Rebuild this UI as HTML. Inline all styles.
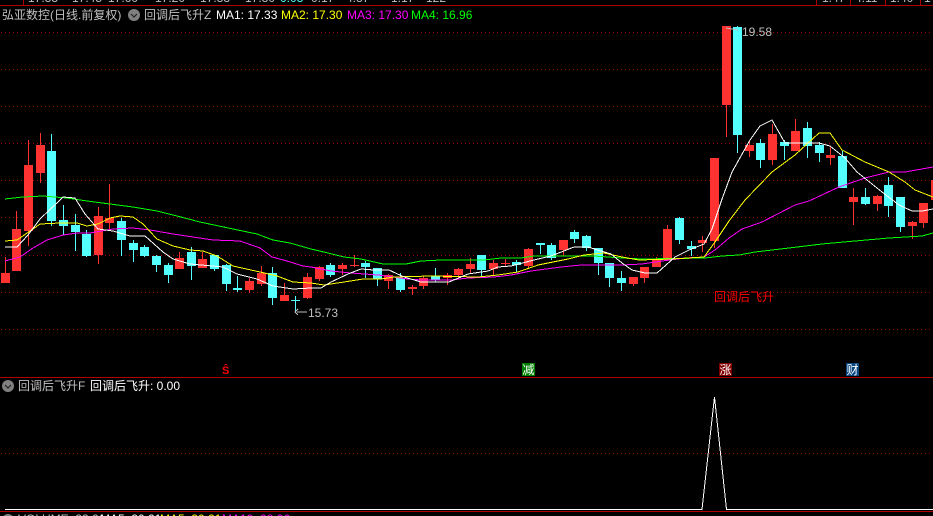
<!DOCTYPE html>
<html><head><meta charset="utf-8"><style>
html,body{margin:0;padding:0;background:#000;width:933px;height:516px;overflow:hidden}
#w{position:relative;width:933px;height:516px;overflow:hidden;background:#000}
svg{position:absolute;left:0;top:0}
.t{position:absolute;white-space:pre;font:12px/14px "Liberation Sans","WenQuanYi Zen Hei","Noto Sans CJK SC",sans-serif}
.b{position:absolute;width:13px;height:13px;top:363px;color:#fff;text-align:center;font:12px/13px "WenQuanYi Zen Hei","Noto Sans CJK SC",sans-serif}
</style></head><body><div id="w">
<svg width="933" height="516" viewBox="0 0 933 516">
<g stroke="#a00000" stroke-dasharray="1 3" shape-rendering="crispEdges">
<path d="M1 32.5H933M1 69.5H933M1 106.5H933M1 143.5H933M1 180.5H933M1 217.5H933M1 255.5H933M1 292.5H933M1 329.5H933M1 453.5H933"/>
</g>
<g fill="#ff3232" shape-rendering="crispEdges"><path d="
M5 257h1V283h-1zM1 273h9V283h-9z
M16 211h1V271h-1zM12 229h9V271h-9z
M28 140h1V246h-1zM24 165h9V231h-9z
M40 133h1V183h-1zM36 145h9V173h-9z
M98 207h1V264h-1zM94 216h9V255h-9z
M109 184h1V230h-1zM105 218h9V223h-9z
M179 252h1V269h-1zM175 258h9V269h-9z
M202 252h1V268h-1zM198 259h9V268h-9z
M249 278h1V293h-1zM245 281h9V290h-9z
M261 266h1V286h-1zM257 273h9V284h-9z
M284 283h1V301h-1zM280 295h9V301h-9z
M307 273h1V299h-1zM303 277h9V298h-9z
M319 266h1V281h-1zM315 267h9V279h-9z
M342 263h1V275h-1zM338 265h9V269h-9z
M354 255h1V267h-1zM350 265h9V266h-9z
M388 274h1V289h-1zM384 275h9V281h-9z
M412 285h1V295h-1zM408 287h9V289h-9z
M423 276h1V289h-1zM419 278h9V286h-9z
M447 273h1V285h-1zM443 275h9V278h-9z
M458 268h1V278h-1zM454 269h9V275h-9z
M470 258h1V273h-1zM466 264h9V269h-9z
M493 260h1V275h-1zM489 263h9V269h-9z
M505 259h1V267h-1zM501 263h9V264h-9z
M528 248h1V268h-1zM524 249h9V266h-9z
M563 240h1V256h-1zM559 240h9V250h-9z
M633 277h1V286h-1zM629 277h9V284h-9z
M644 267h1V283h-1zM640 267h9V278h-9z
M656 257h1V267h-1zM652 260h9V267h-9z
M667 225h1V260h-1zM663 229h9V260h-9z
M702 236h1V252h-1zM698 240h9V243h-9z
M714 158h1V248h-1zM710 158h9V241h-9z
M726 26h1V137h-1zM722 26h9V105h-9z
M749 141h1V157h-1zM745 145h9V151h-9z
M772 124h1V165h-1zM768 134h9V160h-9z
M795 119h1V151h-1zM791 131h9V151h-9z
M830 147h1V165h-1zM826 155h9V158h-9z
M853 188h1V225h-1zM849 197h9V202h-9z
M877 195h1V211h-1zM873 196h9V204h-9z
M912 221h1V239h-1zM908 222h9V226h-9z
M923 203h1V228h-1zM919 203h9V223h-9z
M931 180h2V200h-2z"/></g>
<g fill="#54ffff" shape-rendering="crispEdges"><path d="
M51 134h1V226h-1zM47 151h9V221h-9z
M63 205h1V235h-1zM59 220h9V226h-9z
M75 214h1V251h-1zM71 225h9V232h-9z
M86 230h1V257h-1zM82 234h9V256h-9z
M121 218h1V256h-1zM117 221h9V240h-9z
M133 240h1V262h-1zM129 243h9V250h-9z
M144 245h1V257h-1zM140 247h9V256h-9z
M156 255h1V272h-1zM152 256h9V265h-9z
M168 263h1V283h-1zM164 265h9V275h-9z
M191 247h1V280h-1zM187 252h9V266h-9z
M214 255h1V271h-1zM210 255h9V269h-9z
M226 264h1V291h-1zM222 265h9V284h-9z
M237 276h1V292h-1zM233 288h9V290h-9z
M272 267h1V305h-1zM268 273h9V298h-9z
M295 296h1V313h-1zM291 300h9V301h-9z
M330 263h1V277h-1zM326 265h9V275h-9z
M365 261h1V278h-1zM361 263h9V267h-9z
M377 268h1V286h-1zM373 268h9V279h-9z
M400 273h1V292h-1zM396 278h9V290h-9z
M435 268h1V282h-1zM431 276h9V280h-9z
M481 255h1V277h-1zM477 255h9V270h-9z
M516 260h1V272h-1zM512 262h9V265h-9z
M540 243h1V254h-1zM536 243h9V245h-9z
M551 243h1V260h-1zM547 245h9V258h-9z
M574 230h1V243h-1zM570 232h9V239h-9z
M586 235h1V251h-1zM582 236h9V248h-9z
M598 248h1V275h-1zM594 248h9V263h-9z
M609 263h1V287h-1zM605 263h9V278h-9z
M621 271h1V291h-1zM617 278h9V283h-9z
M679 217h1V244h-1zM675 218h9V240h-9z
M691 241h1V256h-1zM687 246h9V249h-9z
M737 26h1V153h-1zM733 27h9V135h-9z
M760 139h1V168h-1zM756 143h9V160h-9z
M784 140h1V160h-1zM780 142h9V146h-9z
M807 122h1V158h-1zM803 128h9V146h-9z
M819 142h1V162h-1zM815 145h9V153h-9z
M842 151h1V188h-1zM838 156h9V188h-9z
M865 188h1V205h-1zM861 197h9V204h-9z
M888 177h1V217h-1zM884 185h9V206h-9z
M900 197h1V232h-1zM896 197h9V227h-9z"/></g>
<g fill="none" stroke-width="1" shape-rendering="crispEdges">
<polyline stroke="#00ff00" points="5,199 23,197 43,196 67,198 87,201 110,204 133,207 157,211 173,215 200,222 233,229 257,234 273,240 290,243 311,249 328,253 344,257 361,259 383,264 406,264 421,261 441,260 484,260 501,258 521,258 534,256 578,256 594,256 622,258 642,259 705,258 722,256 739,255 755,252 789,248 822,244 855,241 889,238 922,236 933,233"/>
<polyline stroke="#ff00ff" points="5,261 20,257 33,248 47,240 63,235 77,233 90,233 113,229 133,228 150,230 173,234 213,240 240,241 260,248 272,257 287,261 303,266 311,267 331,271 351,273 378,275 408,279 421,280 451,280 468,278 494,277 511,275 531,271 561,267 581,265 622,265 642,264 662,261 685,258 704,257 715,250 729,238 742,229 762,222 795,205 809,201 839,187 865,178 889,172 905,172 933,167"/>
<polyline stroke="#ffff00" points="5,241 17,240 33,229 40,224 60,223 77,223 87,226 98,224 110,218 120,216 133,217 143,224 157,239 173,246 190,250 203,251 217,256 233,266 260,272 277,276 293,282 311,283 324,285 344,282 363,279 381,279 394,277 431,276 478,277 498,275 518,272 538,265 568,259 584,255 604,253 622,257 639,260 672,259 704,257 715,242 729,221 745,200 772,172 795,155 819,133 830,133 842,150 865,162 889,172 905,182 915,190 933,197"/>
<polyline stroke="#ffffff" points="5,247 17,247 28,235 40,219 60,200 63,197 75,198 85,214 98,229 113,231 130,236 145,236 163,252 173,259 190,264 223,267 237,274 257,279 273,286 293,289 311,288 321,288 331,282 348,274 361,269 374,270 389,270 404,277 421,282 449,282 468,274 488,271 498,267 511,266 534,260 551,256 574,247 588,247 611,254 622,263 632,270 645,273 657,273 675,257 689,250 704,244 712,229 722,199 732,172 750,140 760,126 772,120 785,143 819,143 830,146 845,158 857,172 882,192 899,205 912,211 922,211 933,209"/>
<polyline stroke="#ffffff" points="5,509.5 702,509.5 714.5,397 726.5,509.5 933,509.5"/>
<polyline stroke="#c0c0c0" points="726,28 738,30"/>
<polyline stroke="#c0c0c0" points="297,312 307,312"/>
<polyline stroke="#c0c0c0" points="298,309 295,312 298,315"/>
</g>
<g fill="#b00000" shape-rendering="crispEdges">
<rect x="0" y="5" width="933" height="1"/>
<rect x="0" y="377" width="933" height="1"/>
<rect x="0" y="511" width="933" height="1"/>
<rect x="23" y="0" width="1" height="5"/>
<rect x="816" y="0" width="1" height="5"/>
<rect x="850" y="0" width="1" height="5"/>
<rect x="885" y="0" width="1" height="5"/>
<rect x="920" y="0" width="1" height="5"/>
</g>
<circle cx="134" cy="15" r="6" fill="#808080"/>
<path d="M131 14l3 3 3-3" fill="none" stroke="#222" stroke-width="1.2"/>
<circle cx="8" cy="386" r="6" fill="#808080"/>
<path d="M5 385l3 3 3-3" fill="none" stroke="#222" stroke-width="1.2"/>
<circle cx="8" cy="520" r="6" fill="#808080"/>
</svg>
<div class="t" style="left:28px;top:-9px;color:#c0c0c0">17.33</div>
<div class="t" style="left:72px;top:-9px;color:#c0c0c0">17.45</div>
<div class="t" style="left:108px;top:-9px;color:#c0c0c0">17.60</div>
<div class="t" style="left:155px;top:-9px;color:#c0c0c0">17.20</div>
<div class="t" style="left:200px;top:-9px;color:#c0c0c0">17.33</div>
<div class="t" style="left:245px;top:-9px;color:#c0c0c0">17.30</div>
<div class="t" style="left:280px;top:-9px;color:#54ffff">0.03</div>
<div class="t" style="left:311px;top:-9px;color:#c0c0c0">0.17</div>
<div class="t" style="left:346px;top:-9px;color:#c0c0c0">4.87</div>
<div class="t" style="left:391px;top:-9px;color:#c0c0c0">1.17</div>
<div class="t" style="left:426px;top:-9px;color:#c0c0c0">122</div>
<div class="t" style="left:822px;top:-9px;color:#c0c0c0">1.47</div>
<div class="t" style="left:855px;top:-9px;color:#c0c0c0">4.11</div>
<div class="t" style="left:890px;top:-9px;color:#c0c0c0">1.40</div>
<div class="t" style="left:924px;top:-9px;color:#c0c0c0">1</div>
<div class="t" style="left:2px;top:8px;color:#c0c0c0">弘亚数控(日线.前复权)</div>
<div class="t" style="left:144px;top:8px;color:#c0c0c0">回调后飞升Z</div>
<div class="t" style="left:216px;top:8px;color:#fff">MA1: 17.33</div>
<div class="t" style="left:281px;top:8px;color:#ff0">MA2: 17.30</div>
<div class="t" style="left:347px;top:8px;color:#f0f">MA3: 17.30</div>
<div class="t" style="left:411px;top:8px;color:#0f0">MA4: 16.96</div>
<div class="t" style="left:742px;top:25px;color:#c0c0c0">19.58</div>
<div class="t" style="left:308px;top:306px;color:#c0c0c0">15.73</div>
<div class="t" style="left:714px;top:290px;color:#f00">回调后飞升</div>
<div class="t" style="left:222px;top:364px;color:#f00;font-weight:bold;font-size:11px">Ŝ</div>
<div class="b" style="left:522px;background:#008000">减</div>
<div class="b" style="left:719px;background:#800000">涨</div>
<div class="b" style="left:846px;background:#0a4680">财</div>
<div class="t" style="left:18px;top:379px;color:#c0c0c0">回调后飞升F</div>
<div class="t" style="left:90px;top:379px;color:#fff">回调后飞升: 0.00</div>
<div class="t" style="left:18px;top:512px;color:#c0c0c0">VOLUME: 33.21</div>
<div class="t" style="left:100px;top:512px;color:#fff">MA5: 30.21</div>
<div class="t" style="left:160px;top:512px;color:#ff0">MA5: 30.21</div>
<div class="t" style="left:222px;top:512px;color:#f0f">MA10: 28.96</div>
</div></body></html>
